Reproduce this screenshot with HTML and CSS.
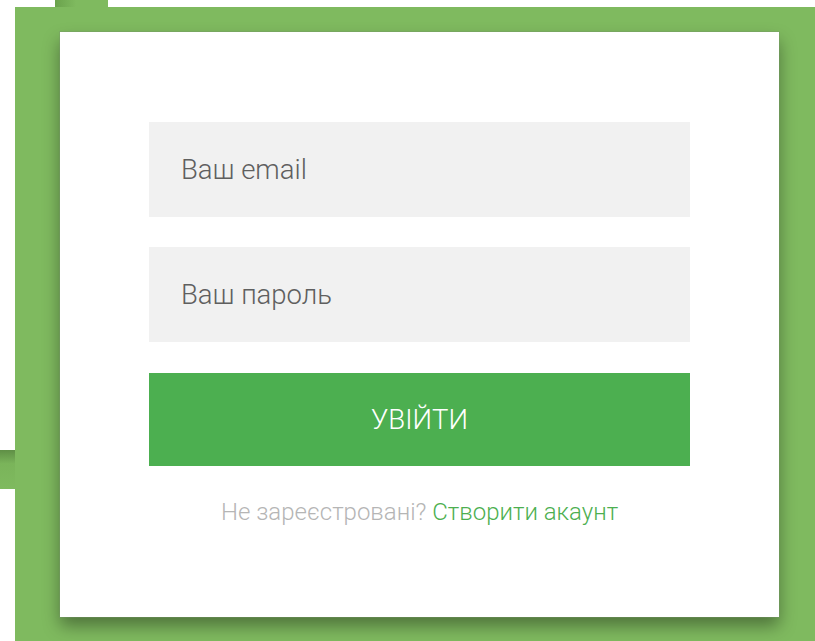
FILE: index.html
```html
<!DOCTYPE html>
<html lang="uk">
<head>
<meta charset="utf-8">
<title>Вхід</title>
<link rel="stylesheet" href="styles.css">
</head>
<body>
  <div class="tab tab-top"></div>
  <div class="tab tab-left"></div>
  <main class="backdrop">
    <form class="card">
      <input class="field" type="email" placeholder="Ваш email">
      <input class="field" type="password" placeholder="Ваш пароль">
      <button class="submit" type="button">УВІЙТИ</button>
      <p class="signup">Не зареєстровані? <a href="#" class="signup-link">Створити акаунт</a></p>
    </form>
  </main>
</body>
</html>
```

FILE: styles.css
```css
html, body {
  margin: 0;
  padding: 0;
  background: #ffffff;
  height: 100%;
  overflow: hidden;
}

body {
  position: relative;
  font-family: Roboto, "Noto Sans", sans-serif;
}

/* decorative green slivers peeking from behind the panel */
.tab {
  position: absolute;
  background: #7fba5f;
}

.tab-top {
  left: 55px;
  top: 0;
  width: 53px;
  height: 7px;
  background: linear-gradient(to right, #6aa24c 0%, #7fba5f 40%, #7fba5f 100%);
}

.tab-left {
  left: 0;
  top: 450px;
  width: 15px;
  height: 39px;
  background: linear-gradient(to bottom, #5f8f46 0%, #7ab45a 35%, #7fba5f 100%);
}

.backdrop {
  margin: 7px 0 0 15px;
  height: calc(100% - 7px);
  background: #7fba5f;
  padding: 25px 36px 0 45px;
  box-sizing: border-box;
}

.card {
  background: #ffffff;
  height: 585px;
  box-sizing: border-box;
  padding: 90px 89px 0 89px;
  display: flex;
  flex-direction: column;
  gap: 31px;
  box-shadow: 0 0 0 1px rgba(120, 150, 110, 0.35), 0 9px 16px rgba(0, 0, 0, 0.38);
  margin: 0;
}

.field {
  display: block;
  width: 100%;
  height: 95px;
  box-sizing: border-box;
  border: none;
  outline: none;
  background: #f1f1f1;
  padding: 0 32px;
  font-family: Roboto, "Noto Sans", sans-serif;
  font-size: 27.5px;
  font-weight: 300;
  color: #555;
}

.field::placeholder {
  color: #5f5f5f;
  opacity: 1;
}

.field + .field {
  margin-top: -1px;
}

.submit {
  display: block;
  width: 100%;
  height: 93px;
  border: none;
  background: #4caf50;
  color: #ffffff;
  font-family: Roboto, "Noto Sans", sans-serif;
  font-size: 27.5px;
  font-weight: 300;
  cursor: pointer;
}

.signup {
  margin: 1px 0 0 0;
  text-align: center;
  font-size: 24px;
  font-weight: 300;
  color: #b5b5b5;
}

.signup-link {
  color: #4caf50;
  text-decoration: none;
}
```
